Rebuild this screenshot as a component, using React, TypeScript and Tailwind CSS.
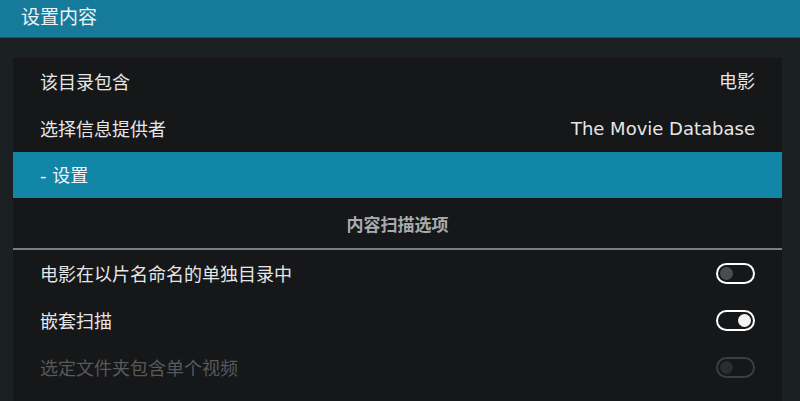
import React from 'react';

const font = { fontFamily: '"DejaVu Sans", "Noto Sans CJK SC", sans-serif' };

const Toggle: React.FC<{ on?: boolean; disabled?: boolean }> = ({ on, disabled }) => {
  if (disabled) {
    return (
      <div className="w-[39px] h-[21px] rounded-full border-2 border-[#3c3e40] flex items-center px-[2px]">
        <div className="w-[13px] h-[13px] rounded-full bg-[#2a2c2e]" />
      </div>
    );
  }
  return (
    <div
      className={`w-[39px] h-[21px] rounded-full border-2 border-white flex items-center px-[2px] ${
        on ? 'justify-end' : 'justify-start'
      }`}
    >
      <div className={`w-[13px] h-[13px] rounded-full ${on ? 'bg-[#f2f2f2]' : 'bg-[#4b4c4e]'}`} />
    </div>
  );
};

const Row: React.FC<{ label: string; right?: React.ReactNode; dim?: boolean }> = ({ label, right, dim }) => (
  <div className="h-[47px] flex items-center justify-between px-[27px]">
    <span className={`text-[18px] pt-[1px] ${dim ? 'text-[#58595b]' : 'text-[#e6e6e6]'}`}>{label}</span>
    {right}
  </div>
);

export default function App() {
  return (
    <div className="w-[800px] h-[401px] bg-[#1b2023] overflow-hidden" style={font}>
      <div className="h-[38px] bg-[#167b9b] flex items-center px-[21px] border-b border-[#0f5a72]">
        <span className="text-[19px] text-[#eef3f5] -mt-[3px]">设置内容</span>
      </div>
      <div className="mt-[20px] ml-[13px] mr-[18px] bg-[#151719] h-[360px]">
        <Row label="该目录包含" right={<span className="text-[18px] text-[#e6e6e6]">电影</span>} />
        <Row
          label="选择信息提供者"
          right={<span className="text-[18px] text-[#e6e6e6]">The Movie Database</span>}
        />
        <div className="h-[46px] bg-[#1186a7] flex items-center px-[27px]">
          <span className="text-[18px] text-[#f4f7f8]">- 设置</span>
        </div>
        <div className="h-[50px] flex items-center justify-center pt-[5px]">
          <span className="text-[17px] font-bold text-[#a9abad]">内容扫描选项</span>
        </div>
        <div className="h-[2px] bg-[#7c7e80]" />
        <Row label="电影在以片名命名的单独目录中" right={<Toggle />} />
        <Row label="嵌套扫描" right={<Toggle on />} />
        <Row label="选定文件夹包含单个视频" dim right={<Toggle disabled />} />
      </div>
    </div>
  );
}
